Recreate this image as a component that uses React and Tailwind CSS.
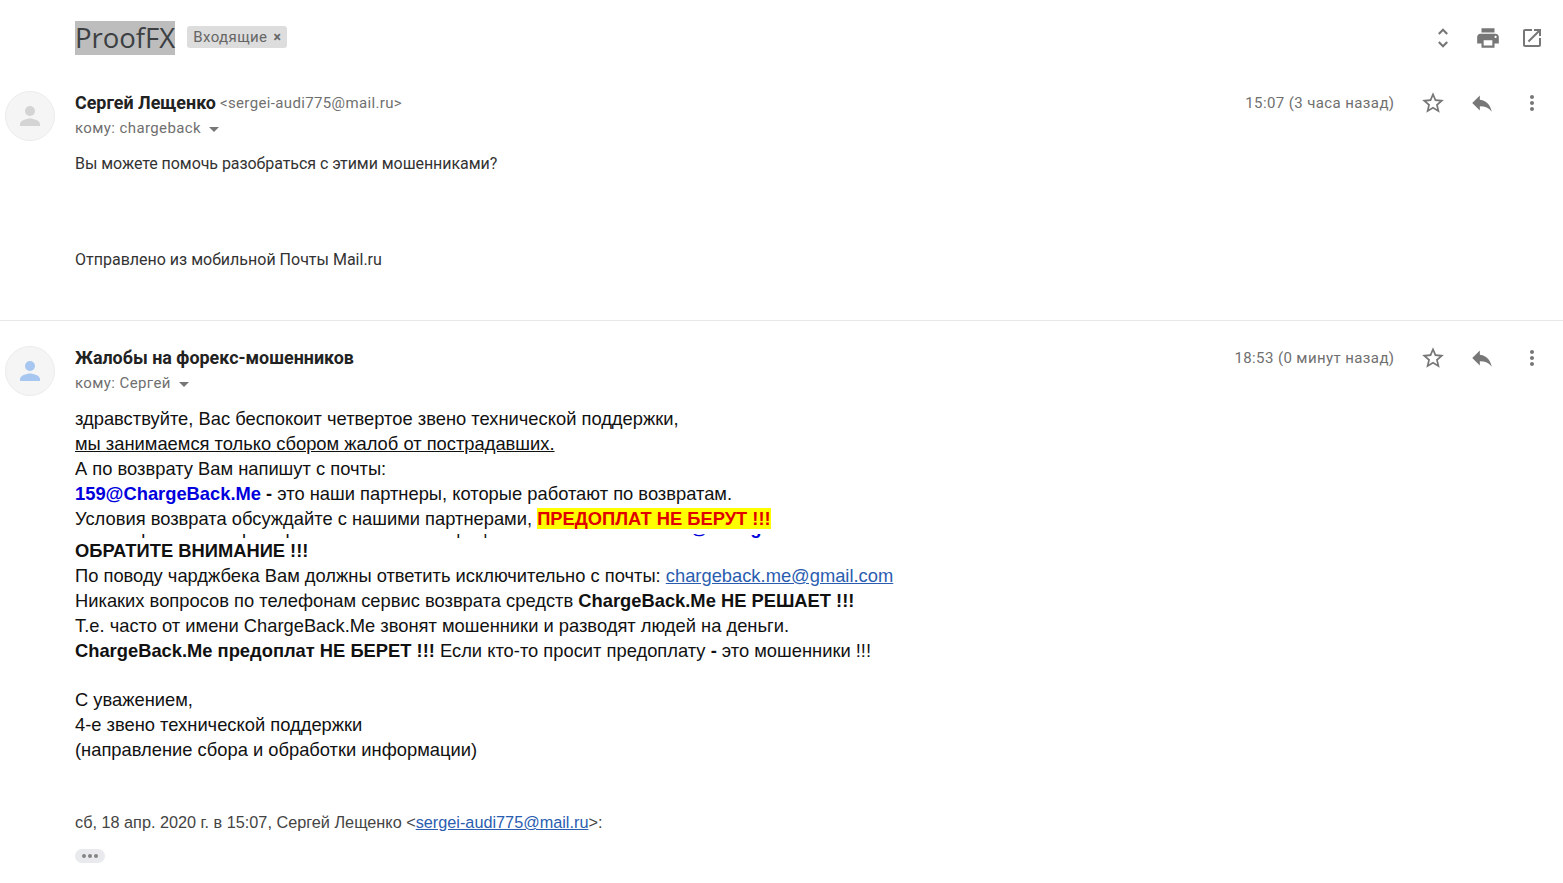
const I = ({ d, className }) => (
  <svg viewBox="0 0 24 24" className={className} fill="currentColor"><path d={d} /></svg>
);
const P = {
  unfold: "M12 5.83L15.17 9l1.41-1.41L12 3 7.41 7.59 8.83 9 12 5.83zm0 12.34L8.83 15l-1.41 1.41L12 21l4.59-4.59L15.17 15 12 18.17z",
  print: "M19 8H5c-1.66 0-3 1.34-3 3v6h4v4h12v-4h4v-6c0-1.66-1.34-3-3-3zm-3 11H8v-5h8v5zm3-7c-.55 0-1-.45-1-1s.45-1 1-1 1 .45 1 1-.45 1-1 1zm-1-9H6v4h12V3z",
  open: "M19 19H5V5h7V3H5c-1.11 0-2 .9-2 2v14c0 1.1.89 2 2 2h14c1.1 0 2-.9 2-2v-7h-2v7zM14 3v2h3.59l-9.83 9.83 1.41 1.41L19 6.41V10h2V3h-7z",
  star: "M22 9.24l-7.19-.62L12 2 9.19 8.63 2 9.24l5.46 4.73L5.82 21 12 17.27 18.18 21l-1.63-7.03L22 9.24zM12 15.4l-3.76 2.27 1-4.28-3.32-2.88 4.38-.38L12 6.1l1.71 4.04 4.38.38-3.32 2.88 1 4.28L12 15.4z",
  reply: "M10 9V5l-7 7 7 7v-4.1c5 0 8.5 1.6 11 5.1-1-5-4-10-11-11z",
  more: "M12 8c1.1 0 2-.9 2-2s-.9-2-2-2-2 .9-2 2 .9 2 2 2zm0 2c-1.1 0-2 .9-2 2s.9 2 2 2 2-.9 2-2-.9-2-2-2zm0 6c-1.1 0-2 .9-2 2s.9 2 2 2 2-.9 2-2-.9-2-2-2z",
};

const Avatar = ({ color }) => (
  <div className="w-[50px] h-[50px] rounded-full bg-[#f5f5f5] border border-[#ececec] flex items-center justify-center shrink-0">
    <svg viewBox="0 0 24 24" width="30" height="30" fill={color}>
      <circle cx="12" cy="8" r="4" />
      <path d="M4 20v-1.5C4 15.8 9 14 12 14s8 1.8 8 4.5V20z" />
    </svg>
  </div>
);

const Actions = ({ time }) => (
  <div className="flex items-center text-[#777] ml-auto">
    <span className="text-[15px] tracking-[0.4px] text-[#6f6f6f] mr-[25px]" style={{ fontFamily: "Roboto, sans-serif" }}>{time}</span>
    <I d={P.star} className="w-[26px] h-[26px]" />
    <I d={P.reply} className="w-[26px] h-[26px] ml-[23px]" />
    <I d={P.more} className="w-[24px] h-[24px] ml-[25.5px]" />
  </div>
);

const To = ({ children }) => (
  <div className="flex items-center mt-[3px] text-[15px] leading-[20px] text-[#6f6f6f] tracking-[0.4px]" style={{ fontFamily: "Roboto, sans-serif" }}>
    {children}
    <span className="ml-[8px] mt-[2px] w-0 h-0 border-x-[5px] border-x-transparent border-t-[5px] border-t-[#777]" />
  </div>
);

export default function App() {
  return (
    <div className="w-[1563px] h-[883px] bg-white text-[#222] overflow-hidden" style={{ fontFamily: "'Liberation Sans', sans-serif" }}>
      <header className="flex items-center h-[34px] mt-[21px] pr-[19px]">
        <h1 className="ml-[75px] bg-[#bdbdbd] h-[34px] leading-[34px] text-[27.5px] font-normal text-[#3c4043]" style={{ fontFamily: "'Open Sans', sans-serif" }}>ProofFX</h1>
        <div className="ml-[12px] -mt-[2px] flex items-center justify-center gap-[6px] w-[100px] h-[22px] rounded-[3px] bg-[#dddddd] text-[15px] tracking-[0.4px] text-[#666]" style={{ fontFamily: "Roboto, sans-serif" }}>
          Входящие <span className="text-[14px] font-bold leading-none">×</span>
        </div>
        <div className="ml-auto flex items-center text-[#777]">
          <I d={P.unfold} className="w-[26px] h-[26px]" />
          <I d={P.print} className="w-[26px] h-[26px] ml-[19.5px]" />
          <I d={P.open} className="w-[24px] h-[24px] ml-[19px]" />
        </div>
      </header>

      <section className="flex pl-[5px] pr-[19px] pt-[36px] h-[266px] border-b border-[#e8e8e8]">
        <Avatar color="#d4d4d4" />
        <div className="ml-[20px] flex-1 min-w-0">
          <div className="flex items-center h-[24px]">
            <span className="text-[17.9px] font-bold text-[#222]" style={{ fontFamily: "Roboto, sans-serif" }}>Сергей Лещенко</span>
            <span className="ml-[4px] text-[15px] text-[#6f6f6f] tracking-[0.36px]" style={{ fontFamily: "Roboto, sans-serif" }}>&lt;sergei-audi775@mail.ru&gt;</span>
            <Actions time="15:07 (3 часа назад)" />
          </div>
          <To>кому: chargeback</To>
          <p className="mt-[14px] text-[16px] leading-[24px] tracking-[-0.06px] text-[#333]" style={{ fontFamily: "Roboto, sans-serif" }}>Вы можете помочь разобраться с этими мошенниками?</p>
          <p className="mt-[72px] text-[16px] leading-[24px] text-[#333]" style={{ fontFamily: "Roboto, sans-serif" }}>Отправлено из мобильной Почты Mail.ru</p>
        </div>
      </section>

      <section className="flex pl-[5px] pr-[19px] pt-[25px]">
        <Avatar color="#a8c7f0" />
        <div className="ml-[20px] flex-1 min-w-0">
          <div className="flex items-center h-[24px]">
            <span className="text-[17.9px] font-bold text-[#222]" style={{ fontFamily: "Roboto, sans-serif" }}>Жалобы на форекс-мошенников</span>
            <Actions time="18:53 (0 минут назад)" />
          </div>
          <To>кому: Сергей</To>

          <div className="mt-[13px] text-[18.33px] leading-[25px] text-[#111]">
            <p>здравствуйте, Вас беспокоит четвертое звено технической поддержки,</p>
            <p className="underline">мы занимаемся только сбором жалоб от пострадавших.</p>
            <p>А по возврату Вам напишут с почты:</p>
            <p><b className="text-[#0000dd]">159@ChargeBack.Me</b> <b>-</b> это наши партнеры, которые работают по возвратам.</p>
            <p>Условия возврата обсуждайте с нашими партнерами, <b className="bg-[#ffff00] text-[#e00000]">ПРЕДОПЛАТ НЕ БЕРУТ !!!</b></p>
            <div className="mt-[3px] h-[4px] overflow-hidden">
              <p className="-mt-[19px] whitespace-nowrap"><span className="inline-block w-[585px]">Все вопросы о возврате решайте только с официальной почты:</span><b className="text-[#0000dd]">159@ChargeBack.Me</b></p>
            </div>
            <p className="font-bold">ОБРАТИТЕ ВНИМАНИЕ !!!</p>
            <p>По поводу чарджбека Вам должны ответить исключительно с почты: <a className="text-[#2a5db0] underline">chargeback.me@gmail.com</a></p>
            <p>Никаких вопросов по телефонам сервис возврата средств <b>ChargeBack.Me НЕ РЕШАЕТ !!!</b></p>
            <p>Т.е. часто от имени ChargeBack.Me звонят мошенники и разводят людей на деньги.</p>
            <p><b>ChargeBack.Me предоплат НЕ БЕРЕТ !!!</b> Если кто-то просит предоплату <b>-</b> это мошенники !!!</p>
            <p className="mt-[24px]">С уважением,</p>
            <p>4-е звено технической поддержки</p>
            <p>(направление сбора и обработки информации)</p>
          </div>

          <p className="mt-[48px] text-[16.25px] leading-[24px] text-[#444]">сб, 18 апр. 2020 г. в 15:07, Сергей Лещенко &lt;<a className="text-[#2a5db0] underline">sergei-audi775@mail.ru</a>&gt;:</p>
          <div className="mt-[15px] w-[30px] h-[14px] rounded-[7px] bg-[#e8eaed] flex items-center justify-center gap-[2px]">
            <span className="w-[4px] h-[4px] rounded-full bg-[#858585]" />
            <span className="w-[4px] h-[4px] rounded-full bg-[#858585]" />
            <span className="w-[4px] h-[4px] rounded-full bg-[#858585]" />
          </div>
        </div>
      </section>
    </div>
  );
}
